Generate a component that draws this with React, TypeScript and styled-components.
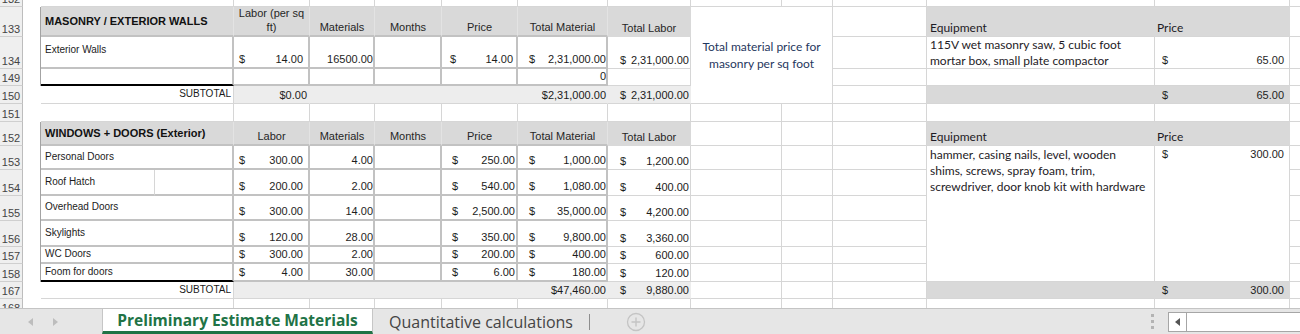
import React from "react";
import styled, { createGlobalStyle, css } from "styled-components";

const GlobalStyle = createGlobalStyle`
  html, body {
    margin: 0;
    padding: 0;
    background: #ffffff;
    overflow: hidden;
  }
  body {
    font-family: "Liberation Sans", Arial, sans-serif;
  }
`;

type HAlign = "left" | "center" | "right";
type VAlign = "top" | "center" | "bottom";
type Tone = "grid" | "blank" | "edge" | "head" | "headEnd" | "box" | "split" | "sub" | "band";
type Font = "label" | "title" | "head" | "wide" | "narrow" | "cal" | "note";

interface Spec {
  r: number;
  c: number;
  cs?: number;
  rs?: number;
  tone: Tone;
  font?: Font;
  h?: HAlign;
  v?: VAlign;
  pl?: number;
  pr?: number;
  pt?: number;
  pb?: number;
  rule?: boolean;
  money?: string;
  content?: React.ReactNode;
}

// column widths: row header, A..O
const COLS = [23, 18, 114, 79, 76, 65, 67, 76, 90, 83, 91, 51, 94, 228, 135, 30];
const ROWS = [
  { n: "132", h: 7 },
  { n: "133", h: 30 },
  { n: "134", h: 32 },
  { n: "149", h: 17 },
  { n: "150", h: 18 },
  { n: "151", h: 18 },
  { n: "152", h: 24 },
  { n: "153", h: 24 },
  { n: "154", h: 26 },
  { n: "155", h: 25 },
  { n: "156", h: 26 },
  { n: "157", h: 17 },
  { n: "158", h: 18 },
  { n: "167", h: 17 },
  { n: "168", h: 17 },
];

const B = 1, D = 3, E = 4, F = 5, G = 6, H = 7, I = 8, J = 9, M = 12, N = 13;
const EDGE_ROWS = [1, 2, 3, 6, 7, 8, 9, 10, 11, 12];

const flexMap = {
  left: "flex-start",
  center: "center",
  right: "flex-end",
  top: "flex-start",
  bottom: "flex-end",
};

const GRID = "#d6d6d6";
const BOX = "#c2c2c2";

const tones: Record<Tone, ReturnType<typeof css>> = {
  grid: css`
    background: #fff;
    border-right: 1px solid ${GRID};
    border-bottom: 1px solid ${GRID};
  `,
  blank: css`
    background: #fff;
  `,
  edge: css`
    background: #fff;
    border-right: 1px solid #a3a3a3;
  `,
  head: css`
    background: #d9d9d9;
    border-right: 1px solid #e3e3e3;
    border-bottom: 2px solid ${BOX};
  `,
  headEnd: css`
    background: #d9d9d9;
    border-right: 1px solid #d9d9d9;
    border-bottom: 1px solid #d9d9d9;
  `,
  box: css`
    background: #fff;
    border-right: 2px solid ${BOX};
    border-bottom: 2px solid ${BOX};
  `,
  split: css`
    background: #fff;
    border-right: 1px solid ${GRID};
    border-bottom: 2px solid ${BOX};
  `,
  sub: css`
    background: #ededed;
    border-right: 1px solid #ededed;
    border-bottom: 1px solid ${GRID};
  `,
  band: css`
    background: #d9d9d9;
    border-right: 1px solid #d9d9d9;
    border-bottom: 1px solid ${GRID};
  `,
};

const fonts: Record<Font, ReturnType<typeof css>> = {
  label: css`
    font: 10px/14px "Liberation Sans", Arial, sans-serif;
    color: #1b1b1b;
  `,
  title: css`
    font: bold 11px/14px "Liberation Sans", Arial, sans-serif;
    color: #111;
  `,
  head: css`
    font: 11px/14px "Liberation Sans", Arial, sans-serif;
    color: #262626;
  `,
  wide: css`
    font: 11px/14px "Liberation Sans", Arial, sans-serif;
    color: #1e1e1e;
  `,
  narrow: css`
    font: 11px/14px "Liberation Sans Narrow", "Liberation Sans", Arial, sans-serif;
    font-stretch: condensed;
    color: #1b1b1b;
  `,
  cal: css`
    font: 12px/16px Lato, "Liberation Sans", sans-serif;
    color: #1e1b26;
  `,
  note: css`
    font: 12px/17px Lato, "Liberation Sans", sans-serif;
    color: #1f3760;
  `,
};

const Page = styled.div`
  width: 1300px;
  height: 334px;
  overflow: hidden;
  display: flex;
  flex-direction: column;
`;

const SheetArea = styled.div`
  height: 308px;
  flex: none;
  overflow: hidden;
`;

const Grid = styled.div<{ $cols: string; $rows: string }>`
  display: grid;
  grid-template-columns: ${(p) => p.$cols};
  grid-template-rows: ${(p) => p.$rows};
  width: max-content;
`;

const RowHead = styled.div<{ $r: number }>`
  grid-row: ${(p) => p.$r};
  grid-column: 1;
  box-sizing: border-box;
  background: #efefef;
  border-right: 1px solid #bdbdbd;
  border-bottom: 1px solid #cfcfcf;
  display: flex;
  align-items: flex-end;
  justify-content: center;
  overflow: hidden;
  padding-bottom: 1px;
  font: 11px/12px "Liberation Sans Narrow", "Liberation Sans", sans-serif;
  font-stretch: condensed;
  color: #444;
`;

const Cell = styled.div<{
  $r: number;
  $c: number;
  $rs: number;
  $cs: number;
  $tone: Tone;
  $font: Font;
  $h: HAlign;
  $v: VAlign;
  $pl: number;
  $pr: number;
  $pt: number;
  $pb: number;
  $rule: boolean;
}>`
  grid-row: ${(p) => `${p.$r} / span ${p.$rs}`};
  grid-column: ${(p) => `${p.$c} / span ${p.$cs}`};
  box-sizing: border-box;
  min-width: 0;
  min-height: 0;
  overflow: hidden;
  display: flex;
  justify-content: ${(p) => flexMap[p.$h]};
  align-items: ${(p) => flexMap[p.$v]};
  text-align: ${(p) => p.$h};
  padding: ${(p) => `${p.$pt}px ${p.$pr}px ${p.$pb}px ${p.$pl}px`};
  white-space: nowrap;
  ${(p) => tones[p.$tone]}
  ${(p) => fonts[p.$font]}
  ${(p) =>
    p.$rule &&
    css`
      border-bottom: 2px solid #000;
    `}
`;

const Text = styled.div``;

const Money = styled.div`
  display: flex;
  justify-content: space-between;
  width: 100%;
`;

const TabBar = styled.div`
  flex: none;
  height: 26px;
  box-sizing: border-box;
  background: #e6e6e6;
  border-top: 1px solid #c4c4c4;
  display: flex;
  align-items: stretch;
`;

const NavArrows = styled.div`
  width: 102px;
  display: flex;
  align-items: center;
  gap: 20px;
  padding-left: 28px;
  box-sizing: border-box;
`;

const ActiveTab = styled.div`
  width: 271px;
  box-sizing: border-box;
  background: #fff;
  border-left: 1px solid #c6c6c6;
  border-right: 1px solid #c6c6c6;
  border-bottom: 3px solid #217346;
  display: flex;
  align-items: center;
  justify-content: center;
  font: bold 15.5px "Open Sans", "Liberation Sans", sans-serif;
  color: #217346;
`;

const Tab = styled.div`
  padding: 0 16px;
  display: flex;
  align-items: center;
  font: 16px "Open Sans", "Liberation Sans", sans-serif;
  color: #444;
`;

const TabSep = styled.div`
  width: 1px;
  height: 16px;
  align-self: center;
  background: #8e8e8e;
`;

const AddButton = styled.div`
  margin-left: 36px;
  display: flex;
  align-items: center;
`;

const Spacer = styled.div`
  flex: 1;
`;

const Dots = styled.div`
  display: flex;
  flex-direction: column;
  justify-content: center;
  gap: 3px;
  padding-right: 14px;
`;

const Dot = styled.span`
  width: 3px;
  height: 3px;
  background: #b3b3b3;
`;

const ScrollBox = styled.div`
  width: 132px;
  height: 20px;
  align-self: center;
  box-sizing: border-box;
  background: #fff;
  border: 1px solid #a6a6a6;
  border-right: none;
  display: flex;
`;

const ScrollButton = styled.div`
  width: 17px;
  border-right: 1px solid #a6a6a6;
  display: flex;
  align-items: center;
  justify-content: center;
`;

const ITEMS = [
  ["Personal Doors", "300.00", "4.00", "250.00", "1,000.00", "1,200.00"],
  ["Roof Hatch", "200.00", "2.00", "540.00", "1,080.00", "400.00"],
  ["Overhead Doors", "300.00", "14.00", "2,500.00", "35,000.00", "4,200.00"],
  ["Skylights", "120.00", "28.00", "350.00", "9,800.00", "3,360.00"],
  ["WC Doors", "300.00", "2.00", "200.00", "400.00", "600.00"],
  ["Foom for doors", "4.00", "30.00", "6.00", "180.00", "120.00"],
];

function header(r: number, title: string, labor: React.ReactNode): Spec[] {
  const col = (c: number, content: React.ReactNode, tone: Tone = "head"): Spec => ({
    r, c, tone, font: "head", h: "center", v: "bottom", pb: 1, content,
  });
  return [
    { r, c: B, cs: 2, tone: "head", font: "title", v: "center", pl: 4, content: title },
    col(D, labor),
    col(E, "Materials"),
    col(F, "Months"),
    col(G, "Price"),
    col(H, "Total Material"),
    col(I, "Total Labor", "headEnd"),
    { r, c: M, tone: "band", font: "cal", v: "bottom", pl: 3, pb: 0, content: "Equipment" },
    { r, c: N, tone: "band", font: "cal", v: "bottom", pl: 2, pb: 0, content: "Price" },
  ];
}

function subtotal(r: number, d: string | null, h: string, i: string, n: string): Spec[] {
  const list: Spec[] = [
    { r, c: B, cs: 2, tone: "grid", font: "label", h: "right", v: "center", pr: 2, content: "SUBTOTAL" },
  ];
  if (d) {
    list.push({ r, c: D, tone: "sub", font: "wide", h: "right", pr: 2, content: d });
    list.push({ r, c: E, cs: 3, tone: "sub" });
  } else {
    list.push({ r, c: D, cs: 4, tone: "sub" });
  }
  list.push({ r, c: H, tone: "sub", font: "narrow", h: "right", pr: 1, content: h });
  list.push({ r, c: I, tone: "sub", font: "narrow", pl: 12, pr: 1, money: i });
  list.push({ r, c: M, tone: "band" });
  list.push({ r, c: N, tone: "band", font: "wide", pl: 7, pr: 5, money: n });
  return list;
}

function buildSheet(): Spec[] {
  const specs: Spec[] = [
    { r: 0, c: B, cs: 2, tone: "grid" },
    { r: 5, c: B, cs: 2, tone: "grid" },
    { r: 14, c: B, cs: 2, tone: "grid" },
    ...header(1, "MASONRY / EXTERIOR WALLS", <>Labor (per sq<br />ft)</>),
    {
      r: 1, c: J, cs: 2, rs: 4, tone: "grid", font: "note", h: "center", v: "center", pb: 0,
      content: <>Total material price for<br />masonry per sq foot</>,
    },
    // row 134
    { r: 2, c: B, cs: 2, tone: "box", font: "label", v: "top", pt: 6, pl: 4, content: "Exterior Walls" },
    { r: 2, c: D, tone: "box", font: "wide", pl: 5, pr: 5, money: "14.00" },
    { r: 2, c: E, tone: "box", font: "wide", h: "right", pr: 0, content: "16500.00" },
    { r: 2, c: F, tone: "box" },
    { r: 2, c: G, tone: "box", font: "wide", pl: 8, pr: 3, money: "14.00" },
    { r: 2, c: H, tone: "box", font: "narrow", pl: 11, pr: 0, money: "2,31,000.00" },
    { r: 2, c: I, tone: "grid", font: "narrow", pl: 12, pr: 1, money: "2,31,000.00" },
    {
      r: 2, c: M, tone: "grid", font: "cal", v: "top", pl: 3, pt: 0,
      content: <>115V wet masonry saw, 5 cubic foot<br />mortar box, small plate compactor</>,
    },
    { r: 2, c: N, tone: "grid", font: "wide", pl: 7, pr: 5, money: "65.00" },
    // row 149
    { r: 3, c: B, cs: 2, tone: "box", rule: true },
    { r: 3, c: D, tone: "box" },
    { r: 3, c: E, tone: "box" },
    { r: 3, c: F, tone: "box" },
    { r: 3, c: G, tone: "box" },
    { r: 3, c: H, tone: "box", font: "narrow", h: "right", pr: 0, content: "0" },
    ...subtotal(4, "$0.00", "$2,31,000.00", "2,31,000.00", "65.00"),
    ...header(6, "WINDOWS + DOORS (Exterior)", "Labor"),
    {
      r: 7, c: M, rs: 6, tone: "grid", font: "cal", v: "top", pl: 3, pt: 1,
      content: (
        <>
          hammer, casing nails, level, wooden
          <br />
          shims, screws, spray foam, trim,
          <br />
          screwdriver, door knob kit with hardware
        </>
      ),
    },
    { r: 7, c: N, rs: 6, tone: "grid", font: "wide", v: "top", pt: 1, pl: 7, pr: 5, money: "300.00" },
    ...subtotal(13, null, "$47,460.00", "9,880.00", "300.00"),
  ];

  ITEMS.forEach(([label, labor, mats, price, totMat, totLab], k) => {
    const r = 7 + k;
    const last = k === ITEMS.length - 1;
    if (k === 1) {
      specs.push({ r, c: B, tone: "split", font: "label", v: "center", pl: 4, content: label });
      specs.push({ r, c: B + 1, tone: "box" });
    } else {
      specs.push({ r, c: B, cs: 2, tone: "box", font: "label", v: "center", pl: 4, rule: last, content: label });
    }
    specs.push({ r, c: D, tone: "box", font: "wide", pl: 5, pr: 5, money: labor });
    specs.push({ r, c: E, tone: "box", font: "wide", h: "right", pr: 0, content: mats });
    specs.push({ r, c: F, tone: "box" });
    specs.push({ r, c: G, tone: "box", font: "narrow", pl: 10, pr: 1, money: price });
    specs.push({ r, c: H, tone: "box", font: "narrow", pl: 11, pr: 0, money: totMat });
    specs.push({ r, c: I, tone: "grid", font: "narrow", pl: 12, pr: 1, money: totLab });
  });

  // fill the rest with plain gridline cells
  const used = ROWS.map(() => COLS.slice(1).map(() => false));
  specs.forEach((s) => {
    for (let y = s.r; y < s.r + (s.rs ?? 1); y++)
      for (let x = s.c; x < s.c + (s.cs ?? 1); x++) used[y][x] = true;
  });
  used.forEach((row, r) =>
    row.forEach((u, c) => {
      if (u) return;
      if (c === 0) specs.push({ r, c, tone: EDGE_ROWS.includes(r) ? "edge" : "blank" });
      else specs.push({ r, c, tone: "grid" });
    })
  );
  return specs;
}

const SPECS = buildSheet();

const Sheet: React.FC = () => (
  <SheetArea>
    <Grid
      $cols={COLS.map((w) => `${w}px`).join(" ")}
      $rows={ROWS.map((r) => `${r.h}px`).join(" ")}
    >
      {ROWS.map((row, k) => (
        <RowHead key={row.n} $r={k + 1}>
          {row.n}
        </RowHead>
      ))}
      {SPECS.map((s) => (
        <Cell
          key={`${s.r}-${s.c}`}
          $r={s.r + 1}
          $c={s.c + 2}
          $rs={s.rs ?? 1}
          $cs={s.cs ?? 1}
          $tone={s.tone}
          $font={s.font ?? "wide"}
          $h={s.h ?? "left"}
          $v={s.v ?? "bottom"}
          $pl={s.pl ?? 3}
          $pr={s.pr ?? 3}
          $pt={s.pt ?? 0}
          $pb={s.pb ?? 1}
          $rule={!!s.rule}
        >
          {s.money != null ? (
            <Money>
              <span>$</span>
              <span>{s.money}</span>
            </Money>
          ) : (
            s.content != null && <Text>{s.content}</Text>
          )}
        </Cell>
      ))}
    </Grid>
  </SheetArea>
);

const SheetTabs: React.FC = () => (
  <TabBar>
    <NavArrows>
      <svg width="5" height="8" viewBox="0 0 5 8">
        <path d="M5 0 L0 4 L5 8 Z" fill="#bdbdbd" />
      </svg>
      <svg width="5" height="8" viewBox="0 0 5 8">
        <path d="M0 0 L5 4 L0 8 Z" fill="#bdbdbd" />
      </svg>
    </NavArrows>
    <ActiveTab>Preliminary Estimate Materials</ActiveTab>
    <Tab>Quantitative calculations</Tab>
    <TabSep />
    <AddButton>
      <svg width="20" height="20" viewBox="0 0 20 20">
        <circle cx="10" cy="10" r="8.5" fill="none" stroke="#c4c4c4" strokeWidth="1.3" />
        <path d="M10 5.5 V14.5 M5.5 10 H14.5" stroke="#c4c4c4" strokeWidth="1.4" />
      </svg>
    </AddButton>
    <Spacer />
    <Dots>
      <Dot />
      <Dot />
      <Dot />
    </Dots>
    <ScrollBox>
      <ScrollButton>
        <svg width="5" height="8" viewBox="0 0 5 8">
          <path d="M5 0 L0 4 L5 8 Z" fill="#555" />
        </svg>
      </ScrollButton>
    </ScrollBox>
  </TabBar>
);

export default function App() {
  return (
    <>
      <GlobalStyle />
      <Page>
        <Sheet />
        <SheetTabs />
      </Page>
    </>
  );
}
